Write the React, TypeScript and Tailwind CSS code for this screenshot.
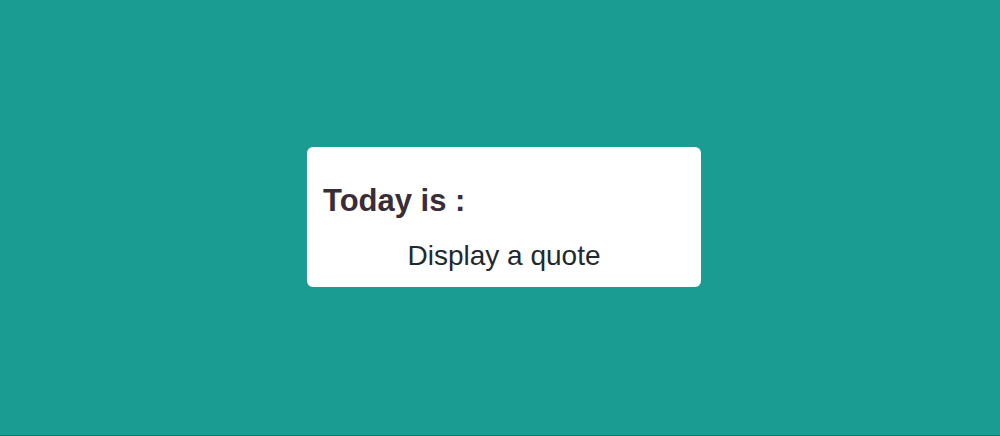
export default function App() {
  return (
    <div className="flex h-[436px] w-full flex-col bg-[#1a9c93]" style={{ fontFamily: '"Liberation Sans", Arial, sans-serif' }}>
      <div className="flex flex-1 items-center justify-center pl-[8px] pb-[2px]">
        <div className="w-[394px] rounded-[6px] bg-white px-[16px] pt-[37px] pb-[15px]">
          <h1 className="text-[31px] font-bold leading-[34px] text-[#3a2d38]">Today is :</h1>
          <p className="mt-[22px] text-center text-[28px] leading-[32px] text-[#1f2a30]">Display a quote</p>
        </div>
      </div>
      <div className="h-px w-full bg-[#0f7a6c]" />
    </div>
  );
}
